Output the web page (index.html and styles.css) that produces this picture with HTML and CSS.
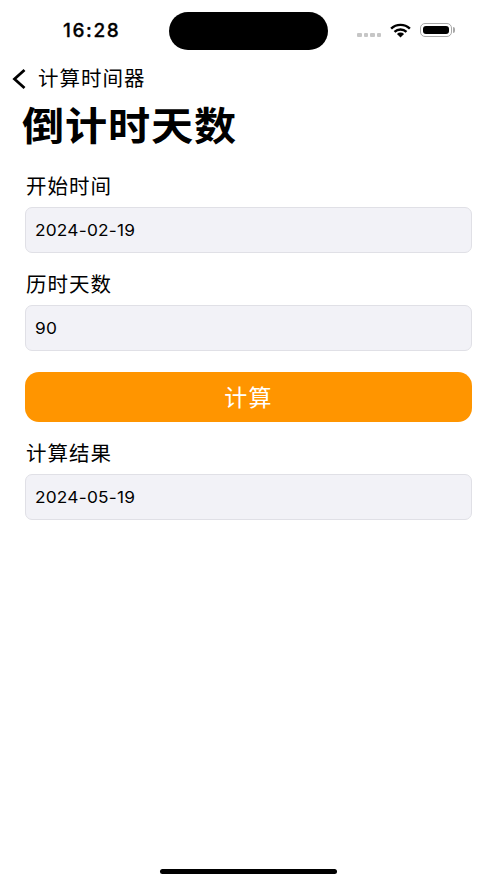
FILE: index.html
```html
<!DOCTYPE html>
<html lang="zh-CN">
<head>
<meta charset="utf-8">
<title>倒计时天数</title>
<link rel="stylesheet" href="styles.css">
</head>
<body>
<div class="screen">
  <header class="status">
    <span class="time">16:28</span>
    <div class="island"></div>
    <div class="indicators">
      <div class="dots"><i></i><i></i><i></i><i></i></div>
      <svg class="wifi" viewBox="0 0 22 16" width="21" height="15" aria-hidden="true">
        <path d="M1 6 A14.5 14.5 0 0 1 21 6" fill="none" stroke="#000" stroke-width="2.6"/>
        <path d="M4.6 9.4 A9.5 9.5 0 0 1 17.4 9.4" fill="none" stroke="#000" stroke-width="2.6"/>
        <path d="M11 15.5 L7.2 11.6 A5.5 5.5 0 0 1 14.8 11.6 Z" fill="#000"/>
      </svg>
      <div class="battery"><div class="level"></div></div>
    </div>
  </header>
  <nav class="nav">
    <svg class="back" viewBox="0 0 16 22" width="16" height="22" aria-hidden="true">
      <path d="M13.5 2 L3.5 11 L13.5 20" fill="none" stroke="#000" stroke-width="2.8"/>
    </svg>
    <span class="nav-title">计算时间器</span>
  </nav>
  <h1 class="title"><span class="wide">倒计时天数</span></h1>
  <main class="form">
    <section class="field">
      <label class="label">开始时间</label>
      <div class="input"><span class="wide">2024-02-19</span></div>
    </section>
    <section class="field">
      <label class="label">历时天数</label>
      <div class="input"><span class="wide">90</span></div>
    </section>
    <button class="calc" type="button">计算</button>
    <section class="field">
      <label class="label">计算结果</label>
      <div class="input"><span class="wide">2024-05-19</span></div>
    </section>
  </main>
  <div class="home"></div>
</div>
</body>
</html>
```
FILE: styles.css
```css
* { box-sizing: border-box; }
html, body { margin: 0; padding: 0; background: #fff; }
body { font-family: "Inter", "Noto Sans CJK SC", sans-serif; color: #000; }
.screen { width: 497px; height: 883px; position: relative; overflow: hidden; }
.wide { display: inline-block; transform-origin: left center; transform: scaleX(1.08); }
.status { height: 62px; padding: 12px 41px 0 63px; display: flex; align-items: flex-start; }
.time { width: 106px; margin-top: 7px; font-size: 19px; line-height: 23px; font-weight: 500; letter-spacing: 1.6px; -webkit-text-stroke: 0.3px #000; }
.island { width: 159px; height: 38px; border-radius: 19px; background: #000; }
.indicators { margin-left: 29px; display: flex; align-items: flex-start; }
.dots { display: flex; gap: 2px; margin-top: 21px; width: 25px; }
.dots i { width: 4.5px; height: 4px; border-radius: 1px; background: #c6c6c6; }
.wifi { margin: 11px 0 0 8px; }
.battery { position: relative; width: 32px; height: 14px; margin: 11px 0 0 9px; padding: 2px; border: 1px solid #a8a8a8; border-radius: 5px; }
.battery::after { content: ""; position: absolute; right: -4px; top: 3px; width: 2px; height: 6px; border-radius: 0 2px 2px 0; background: #a8a8a8; }
.level { height: 100%; border-radius: 3px; background: #000; }
.nav { height: 33px; padding-left: 11px; display: flex; align-items: center; }
.back { display: block; }
.nav-title { margin-left: 11px; font-size: 20.5px; line-height: 33px; letter-spacing: 1px; }
.title { margin: 0; padding: 8px 0 0 22px; height: 46px; font-size: 39px; line-height: 46px; font-weight: 700; letter-spacing: 0.8px; box-sizing: content-box; }
.form { padding: 23px 25px 0; display: flex; flex-direction: column; }
.field { display: flex; flex-direction: column; margin-bottom: 17px; }
.label { font-size: 20.5px; line-height: 30px; letter-spacing: 1px; padding-left: 1px; margin-bottom: 7px; height: 28px; }
.input { height: 46px; padding-left: 9px; display: flex; align-items: center; background: #f2f2f7; border: 1px solid #e0e0e6; border-radius: 7px; font-size: 16px; letter-spacing: 0.2px; }
.calc { height: 50px; margin: 4px 0 17px; padding: 0 0 3px; border: 0; border-radius: 14px; background: #ff9500; color: #fff; font: inherit; font-size: 23px; letter-spacing: 1.2px; }
.home { position: absolute; left: 160px; top: 869px; width: 177px; height: 5px; border-radius: 3px; background: #000; }
```
